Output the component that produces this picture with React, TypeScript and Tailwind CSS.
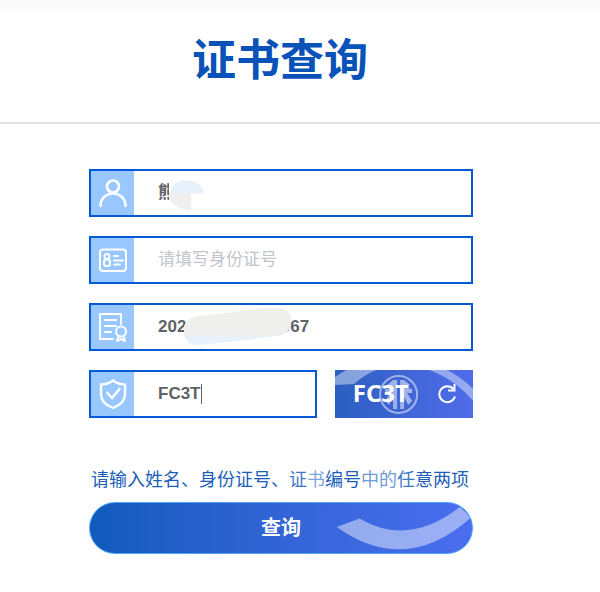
import type { InputHTMLAttributes, ReactNode } from "react"

type FieldProps = InputHTMLAttributes<HTMLInputElement> & {
    label: string
    icon: ReactNode
    children?: ReactNode
}

function Field({ label, icon, children, ...props }: FieldProps) {
    return (
        <label className="relative flex h-12 w-full min-w-0 border-2 border-[#0558d6] bg-white">
            <span className="flex w-[43px] shrink-0 items-center justify-center bg-[#98c8ff]">{icon}</span>
            <input
                {...props}
                aria-label={label}
                className="w-full min-w-0 bg-transparent pl-6 text-[17px] font-bold text-[#606266] outline-none placeholder:font-normal placeholder:text-[#c0c4cc]"
            />
            {children}
        </label>
    )
}

function Icon({ children }: { children: ReactNode }) {
    return (
        <svg
            viewBox="0 0 32 32"
            className="size-8"
            fill="none"
            stroke="white"
            strokeWidth="2"
            strokeLinecap="round"
            strokeLinejoin="round"
            aria-hidden="true"
        >
            {children}
        </svg>
    )
}

export default function App() {
    return (
        <main className="w-full bg-white font-['Liberation_Sans','Noto_Sans_CJK_SC',sans-serif]">
            <header className="flex h-[124px] items-center justify-center border-b-2 border-[#e2e2e2] bg-linear-to-b from-[#f9f9f9] to-white to-15% pr-10">
                <h1 className="text-[44px] leading-none font-bold text-[#0852b8]">证书查询</h1>
            </header>
            <div className="pt-[45px] pr-[38px]">
                <form className="mx-auto w-full max-w-96" onSubmit={(e) => e.preventDefault()}>
                    <div className="flex flex-col gap-[19px]">
                        <Field
                            label="姓名"
                            defaultValue="熊"
                            icon={
                                <Icon>
                                    <circle cx="16" cy="9.5" r="6" strokeWidth="2.6" />
                                    <path d="M3.5 29c0-7.5 5.5-12.5 12.5-12.5S28.5 21.5 28.5 29" strokeWidth="2.6" />
                                </Icon>
                            }
                        >
                            <svg viewBox="0 0 40 32" className="absolute top-2 left-[77px] h-8 w-10" aria-hidden="true">
                                <path d="M1 4h12v22H1Z" fill="white" />
                                <path d="M2 14C4 5 12 0 18 2c9-1 16 3 18 12l-13 1Z" fill="#e8f0fc" />
                                <path d="M1 14h22v17C12 31 4 26 1 20Z" fill="#efefef" />
                            </svg>
                        </Field>
                        <Field
                            label="身份证号"
                            placeholder="请填写身份证号"
                            icon={
                                <Icon>
                                    <rect x="3" y="5.5" width="26" height="21.5" rx="3" />
                                    <circle cx="10" cy="12.5" r="2.5" />
                                    <rect x="7" y="15.5" width="6" height="6.5" rx="2.5" />
                                    <path d="M17 12h4M17 16.5h9M17 20.5h6" />
                                </Icon>
                            }
                        />
                        <Field
                            label="证书编号"
                            defaultValue={"202" + " ".repeat(20) + "067"}
                            icon={
                                <Icon>
                                    <path d="M24 13V3H3v25h13M8 9h11M8 15h11M8 21h6" />
                                    <circle cx="24" cy="20.5" r="5" />
                                    <path d="m21.5 25-1.500 5 4-2 4 2-1.500-5" />
                                </Icon>
                            }
                        >
                            <svg
                                viewBox="0 0 110 40"
                                className="absolute top-0.5 left-[92px] h-10 w-[110px]"
                                aria-hidden="true"
                            >
                                <path d="M1 20h96L93 29 70 32 45 35 15 38Q4 38 1 28Z" fill="#e8f0fc" />
                                <path d="M1 28V19Q4 10 17 9L65 3 93 1Q108 1 108 14 108 27 95 29Z" fill="#efefed" />
                            </svg>
                        </Field>
                        <div className="flex gap-[18px]">
                            <Field
                                label="验证码"
                                defaultValue="FC3T"
                                icon={
                                    <Icon>
                                        <path
                                            d="M16 2.500c4 3 8 4 12 4V16c0 7-4 11-12 14C8 27 4 23 4 16V6.500c4 0 8-1 12-4Z"
                                            strokeWidth="2.4"
                                        />
                                        <path d="m10.500 15 4.500 5 7.500-9" strokeWidth="2.6" />
                                    </Icon>
                                }
                            >
                                <span className="absolute top-3 left-[110px] h-5 w-px bg-[#606266]" />
                            </Field>
                            <button
                                type="button"
                                aria-label="刷新验证码"
                                className="relative flex h-12 w-[36%] shrink-0 items-center justify-between overflow-hidden bg-linear-to-r from-[#2b5fc0] to-[#506cea] pr-4 pl-[18px] text-white"
                            >
                                <svg
                                    viewBox="0 0 138 48"
                                    className="absolute inset-0 size-full"
                                    preserveAspectRatio="none"
                                    aria-hidden="true"
                                >
                                    <path
                                        d="M0 7 11 0H41Q29 5 19 14L0 15ZM94 0h18q14 7 26 19v12Q119 9 94 0Z"
                                        fill="white"
                                        opacity="0.42"
                                    />
                                    <g opacity="0.5">
                                        <circle cx="63.5" cy="24.5" r="18.5" fill="none" stroke="white" strokeWidth="2" />
                                        <path
                                            d="M58 10h4v29h-4V27l-4 8-4-4 5-8h-5v-4l5-1v-3h-3ZM69 10h-4v29h4V27l4 8 4-4-5-8h5v-4l-5-1v-3h3Z"
                                            fill="white"
                                        />
                                    </g>
                                </svg>
                                <span className="relative pb-0.5 font-['Noto_Sans'] text-2xl leading-none font-bold">
                                    FC3T
                                </span>
                                <svg
                                    viewBox="0 0 20 20"
                                    className="relative size-5"
                                    fill="none"
                                    stroke="white"
                                    strokeWidth="2"
                                    aria-hidden="true"
                                >
                                    <path d="M16.500 5A8 8 0 1 0 18 12.500" />
                                    <path d="M17.500 0v6.500H11" />
                                </svg>
                            </button>
                        </div>
                    </div>
                    <p className="mt-12 pl-0.5 text-lg whitespace-nowrap text-[#1d5eb8]">
                        请输入姓名、身份证号、
                        <span className="text-[#3f78c8]">证</span>
                        <span className="text-[#7fa6dc]">书</span>
                        编号
                        <span className="text-[#6f9ad6]">中的</span>
                        <span className="text-[#3f78c8]">任</span>
                        意两项
                    </p>
                    <button
                        type="submit"
                        className="relative mt-2 h-[52px] w-full overflow-hidden rounded-full border border-[#4fa5ff] bg-linear-to-r from-[#105abc] to-[#4b6ef0] text-xl font-bold text-white"
                    >
                        <svg
                            viewBox="0 0 384 52"
                            className="absolute inset-0 size-full"
                            preserveAspectRatio="none"
                            aria-hidden="true"
                        >
                            <path d="m248 25 23-9q49 30 101-12l11 11q-66 61-135 10Z" fill="white" opacity="0.45" />
                        </svg>
                        <span className="relative">查询</span>
                    </button>
                </form>
            </div>
        </main>
    )
}
